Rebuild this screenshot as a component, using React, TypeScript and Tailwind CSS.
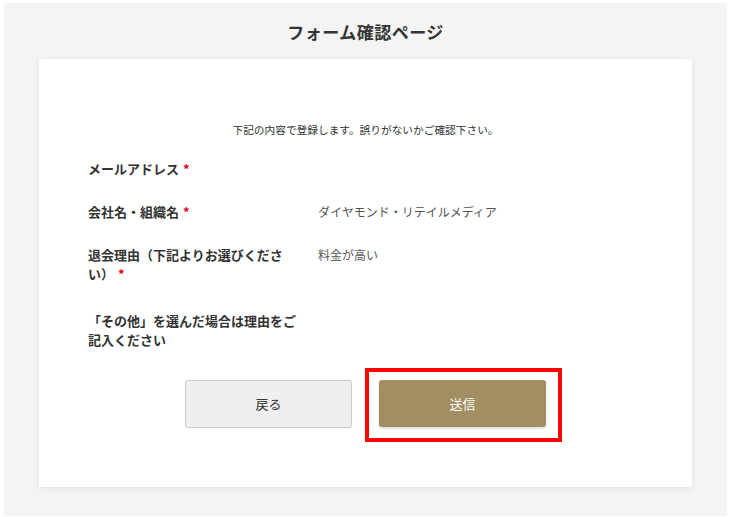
const rows = [
  { label: "メールアドレス", required: true, value: "" },
  { label: "会社名・組織名", required: true, value: "ダイヤモンド・リテイルメディア" },
  { label: "退会理由（下記よりお選びください）", required: true, value: "料金が高い", spaced: true },
  { label: "「その他」を選んだ場合は理由をご記入ください", required: false, value: "" },
];

export default function App() {
  return (
    <div
      className="w-[729px] h-[517px] bg-white pt-[3px] pl-[4px] pr-[2px] pb-[1px]"
      style={{ fontFamily: '"Noto Sans CJK JP", "Noto Sans", sans-serif' }}
    >
      <div className="h-full bg-[#f4f4f4] flex flex-col">
        <h1 className="text-center text-[17px] font-bold text-[#333] tracking-[0.5px] pt-[17px] h-[56px] leading-[24px]">
          フォーム確認ページ
        </h1>
        <div className="mx-[35px] h-[428px] bg-white shadow-[0_1px_6px_rgba(0,0,0,0.08)] pt-[63px]">
          <p className="text-center text-[10.7px] leading-[16px] text-[#333]">
            下記の内容で登録します。誤りがないかご確認下さい。
          </p>
          <div className="pl-[49px] pt-[9px]">
            {rows.map((r, i) => (
              <div key={i} className={`flex pt-[12px] ${r.spaced ? "pb-[16px]" : "pb-[12px]"}`}>
                <div className="w-[230px] shrink-0 pr-[20px] text-[13px] leading-[19px] font-bold text-[#333]">
                  {r.label}
                  {r.required && <span className="text-[#e60012] ml-[4px]">*</span>}
                </div>
                <div className="text-[12px] leading-[19px] text-[#555]">{r.value}</div>
              </div>
            ))}
          </div>
          <div className="flex justify-center gap-[27px] mt-[19px]">
            <button className="w-[167px] h-[48px] bg-[#efefef] border border-[#ccc] rounded-[3px] text-[13px] text-[#333]">
              戻る
            </button>
            <div className="border-[4px] border-[#f00] pt-[8px] pb-[10px] pl-[10px] pr-[12px] -ml-[14px] -mr-[16px] -mt-[12px] -mb-[14px]">
              <button className="w-[167px] h-[47px] bg-[#a38d62] rounded-[3px] text-[13px] text-white shadow-[0_2px_3px_rgba(0,0,0,0.12)] block">
                送信
              </button>
            </div>
          </div>
        </div>
      </div>
    </div>
  );
}
